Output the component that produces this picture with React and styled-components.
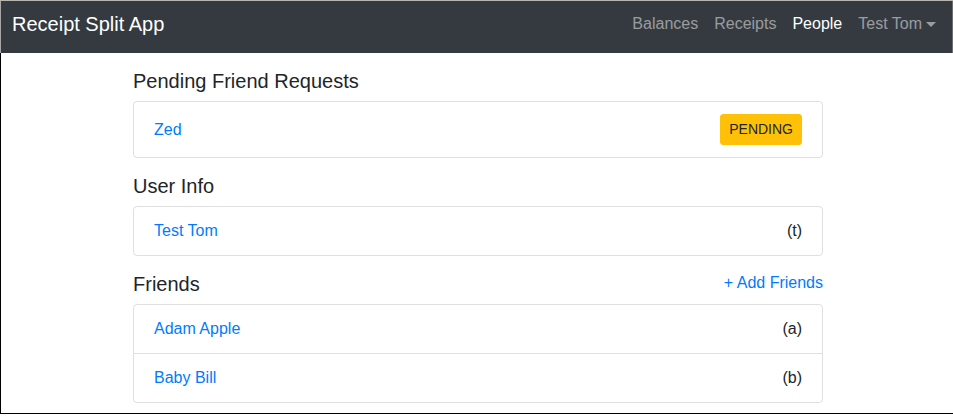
import React from "react";
import styled, { createGlobalStyle } from "styled-components";

const GlobalStyle = createGlobalStyle`
  html, body {
    margin: 0;
    padding: 0;
    background: #fff;
  }
  body {
    font-family: "Liberation Sans", Arial, Helvetica, sans-serif;
    font-size: 16px;
    line-height: 1.5;
    color: #212529;
  }
`;

const Frame = styled.div`
  width: 953px;
  height: 416px;
  box-sizing: border-box;
  border-top: 1px solid #b9b5b1;
  overflow: hidden;
`;

const Navbar = styled.nav`
  height: 52px;
  box-sizing: border-box;
  background: #343a40;
  border-left: 1px solid #a9a7a6;
  border-right: 1px solid #6b6e72;
  padding: 3px 8px 0 11px;
  display: flex;
  align-items: flex-start;
  justify-content: space-between;
`;

const Brand = styled.a`
  color: #fff;
  font-size: 20px;
  line-height: 30px;
  padding: 5px 0;
  text-decoration: none;
`;

const NavLinks = styled.div`
  display: flex;
  align-items: center;
`;

const NavLink = styled.a`
  padding: 8px;
  line-height: 24px;
  color: ${(p) => (p.active ? "#fff" : "rgba(255,255,255,.5)")};
  text-decoration: none;
  display: flex;
  align-items: center;
`;

const Caret = styled.span`
  display: inline-block;
  margin-left: 4px;
  width: 0;
  height: 0;
  border-top: 5px solid rgba(255,255,255,.5);
  border-left: 5px solid transparent;
  border-right: 5px solid transparent;
  margin-top: 1px;
`;

const Main = styled.main`
  height: 361px;
  box-sizing: border-box;
  border-left: 1px solid #000;
  border-bottom: 1px solid #000;
  padding-left: 2px;
`;

const Container = styled.div`
  max-width: 720px;
  margin: 0 auto;
  padding: 16px 15px 0;
  box-sizing: border-box;
`;

const Section = styled.section`
  margin-bottom: 16px;
`;

const SectionHead = styled.div`
  display: flex;
  align-items: center;
  justify-content: space-between;
  margin-bottom: 8px;
`;

const Title = styled.h5`
  margin: 0;
  font-size: 20px;
  font-weight: 500;
  line-height: 24px;
`;

const Link = styled.a`
  color: #007bff;
  text-decoration: none;
`;

const HeadLink = styled(Link)`
  line-height: 22px;
  margin-bottom: 2px;
`;

const ListGroup = styled.ul`
  list-style: none;
  margin: 0;
  padding: 0;
  border: 1px solid rgba(0,0,0,.125);
  border-radius: 4px;
`;

const Item = styled.li`
  display: flex;
  align-items: center;
  justify-content: space-between;
  padding: 12px 20px;
  & + & {
    border-top: 1px solid rgba(0,0,0,.125);
  }
`;

const Badge = styled.span`
  background: #ffc107;
  border: 1px solid #ffc107;
  color: #212529;
  font-size: 14px;
  line-height: 21px;
  padding: 4px 8px;
  border-radius: 3px;
`;

const friends = [
  { name: "Adam Apple", handle: "a" },
  { name: "Baby Bill", handle: "b" },
];

export default function App() {
  return (
    <Frame>
      <GlobalStyle />
      <Navbar>
        <Brand href="#">Receipt Split App</Brand>
        <NavLinks>
          <NavLink href="#">Balances</NavLink>
          <NavLink href="#">Receipts</NavLink>
          <NavLink href="#" active>People</NavLink>
          <NavLink href="#">
            Test Tom
            <Caret />
          </NavLink>
        </NavLinks>
      </Navbar>
      <Main>
        <Container>
          <Section>
            <SectionHead>
              <Title>Pending Friend Requests</Title>
            </SectionHead>
            <ListGroup>
              <Item>
                <Link href="#">Zed</Link>
                <Badge>PENDING</Badge>
              </Item>
            </ListGroup>
          </Section>
          <Section>
            <SectionHead>
              <Title>User Info</Title>
            </SectionHead>
            <ListGroup>
              <Item>
                <Link href="#">Test Tom</Link>
                <span>(t)</span>
              </Item>
            </ListGroup>
          </Section>
          <Section>
            <SectionHead>
              <Title>Friends</Title>
              <HeadLink href="#">+ Add Friends</HeadLink>
            </SectionHead>
            <ListGroup>
              {friends.map((f) => (
                <Item key={f.handle}>
                  <Link href="#">{f.name}</Link>
                  <span>({f.handle})</span>
                </Item>
              ))}
            </ListGroup>
          </Section>
        </Container>
      </Main>
    </Frame>
  );
}
